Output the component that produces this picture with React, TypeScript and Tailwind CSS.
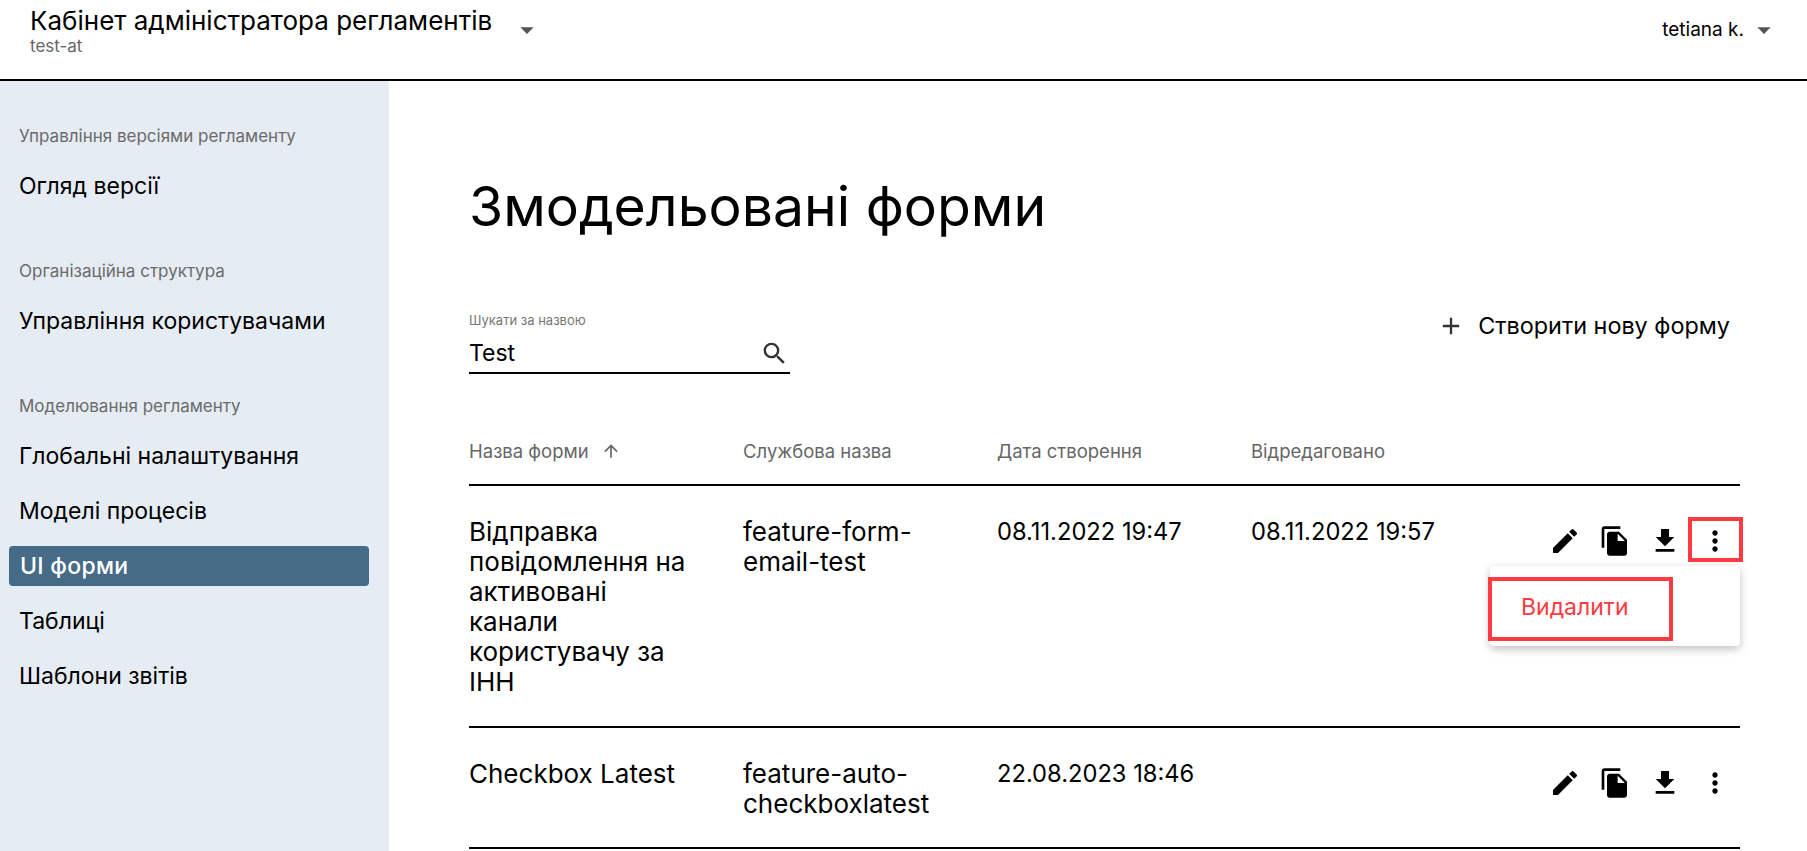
import { MdAdd, MdArrowUpward, MdArrowDropDown, MdEdit, MdFileCopy, MdFileDownload, MdMoreVert, MdSearch } from 'react-icons/md'

type FormRow = {
  name: string
  slug: string
  created: string
  edited: string
  height: string
  menu?: boolean
}

const rows: FormRow[] = [
  {
    name: 'Відправка повідомлення на активовані канали користувачу за ІНН',
    slug: 'feature-form-email-test',
    created: '08.11.2022 19:47',
    edited: '08.11.2022 19:57',
    height: 'h-[242px]',
    menu: true,
  },
  {
    name: 'Checkbox Latest',
    slug: 'feature-auto-checkboxlatest',
    created: '22.08.2023 18:46',
    edited: '',
    height: 'h-[121px]',
  },
]

const nav = [
  { title: 'Управління версіями регламенту', items: ['Огляд версії'] },
  { title: 'Організаційна структура', items: ['Управління користувачами'] },
  { title: 'Моделювання регламенту', items: ['Глобальні налаштування', 'Моделі процесів', 'UI форми', 'Таблиці', 'Шаблони звітів'] },
]

function Actions({ row }: { row: FormRow }) {
  return (
    <div className="relative flex items-center h-[50px] -mt-[1px] text-black">
      <button className="w-[50px] flex justify-center"><MdEdit className="w-8 h-8" /></button>
      <button className="w-[50px] flex justify-center"><MdFileCopy className="w-8 h-8" /></button>
      <button className="w-[50px] flex justify-center"><MdFileDownload className="w-8 h-8" /></button>
      <button className="w-[50px] flex justify-center"><MdMoreVert className="w-8 h-8" /></button>
      {row.menu && (
        <>
          <div className="absolute right-[-3px] top-[1px] w-[55px] h-[45px] border-4 border-[#ff3b41]" />
          <div className="absolute right-0 top-[50px] w-[250px] h-[80px] bg-white rounded-sm shadow-[0_3px_8px_rgba(0,0,0,0.25)] z-10">
            <div className="absolute left-[-2px] top-[11px] w-[185px] h-[64px] border-4 border-[#ff3b41] pl-[29px] pb-[4px] flex items-center text-[23px] text-[#ff3b41]">
              Видалити
            </div>
          </div>
        </>
      )}
    </div>
  )
}

export default function App() {
  return (
    <div className="h-screen overflow-hidden flex flex-col bg-white text-black font-['Inter',sans-serif]">
      <header className="h-[81px] shrink-0 border-b-2 border-black flex justify-between pl-[30px] pr-[27px]">
        <div className="flex items-start pt-[5px]">
          <div>
            <div className="text-[26px] leading-[32px]">Кабінет адміністратора регламентів</div>
            <div className="text-[17px] leading-[18px] text-[#666]">test-at</div>
          </div>
          <MdArrowDropDown className="w-8 h-8 text-[#555] ml-[19px] mt-[9px]" />
        </div>
        <div className="flex items-center h-[60px] text-[19px]">
          tetiana k.
          <MdArrowDropDown className="w-8 h-8 text-[#555] ml-[4px]" />
        </div>
      </header>
      <div className="flex flex-1 min-h-0">
        <aside className="w-[389px] shrink-0 bg-[#e6ecf3] pl-[9px] pr-[20px] pt-[43px]">
          {nav.map((group) => (
            <div key={group.title} className="mb-[53px]">
              <div className="px-[10px] h-[24px] leading-[24px] text-[17px] text-[#6b6b6b] mb-[18px]">{group.title}</div>
              {group.items.map((item) => (
                <div
                  key={item}
                  className={
                    item === 'UI форми'
                      ? 'h-[40px] mb-[15px] px-[11px] flex items-center text-[23px] font-medium tracking-[0.3px] rounded-sm text-white bg-[#456b87]'
                      : 'h-[40px] mb-[15px] px-[10px] flex items-center text-[23px]'
                  }
                >
                  {item}
                </div>
              ))}
            </div>
          ))}
        </aside>
        <main className="flex-1 min-w-0 pl-[80px] pr-[67px] pt-[83px]">
          <h1 className="text-[55.3px] leading-[84px]">Змодельовані форми</h1>
          <div className="flex justify-between items-start mt-[64px]">
            <div className="w-[321px] border-b-2 border-black h-[62px]">
              <div className="text-[13px] leading-[16px] text-[#777]">Шукати за назвою</div>
              <div className="flex items-center justify-between mt-[9px]">
                <span className="text-[23px] leading-[32px]">Test</span>
                <MdSearch className="w-[29px] h-[29px] text-[#333] mr-[1px]" />
              </div>
            </div>
            <div className="flex items-center text-[23.4px] h-[28px] pr-[10px]">
              <MdAdd className="w-7 h-7 text-[#333] mr-[13px]" />
              Створити нову форму
            </div>
          </div>
          <div className="mt-[45px] border-b-2 border-black h-[67px] grid grid-cols-[274px_254px_254px_1fr] items-start pt-[20px] text-[18.5px] leading-[24px] text-[#666]">
            <div className="flex items-center">Назва форми <MdArrowUpward className="w-5 h-5 ml-[12px]" /></div>
            <div>Службова назва</div>
            <div>Дата створення</div>
            <div>Відредаговано</div>
          </div>
          {rows.map((row) => (
            <div key={row.slug} className={`${row.height} border-b-2 border-black grid grid-cols-[274px_254px_254px_1fr_auto] items-start pt-[31px] text-[26px] leading-[30px]`}>
              <div className="pr-[44px]">{row.name}</div>
              <div className="pr-[40px]">{row.slug}</div>
              <div className="text-[23.7px]">{row.created}</div>
              <div className="text-[23.7px]">{row.edited}</div>
              <Actions row={row} />
            </div>
          ))}
        </main>
      </div>
    </div>
  )
}
